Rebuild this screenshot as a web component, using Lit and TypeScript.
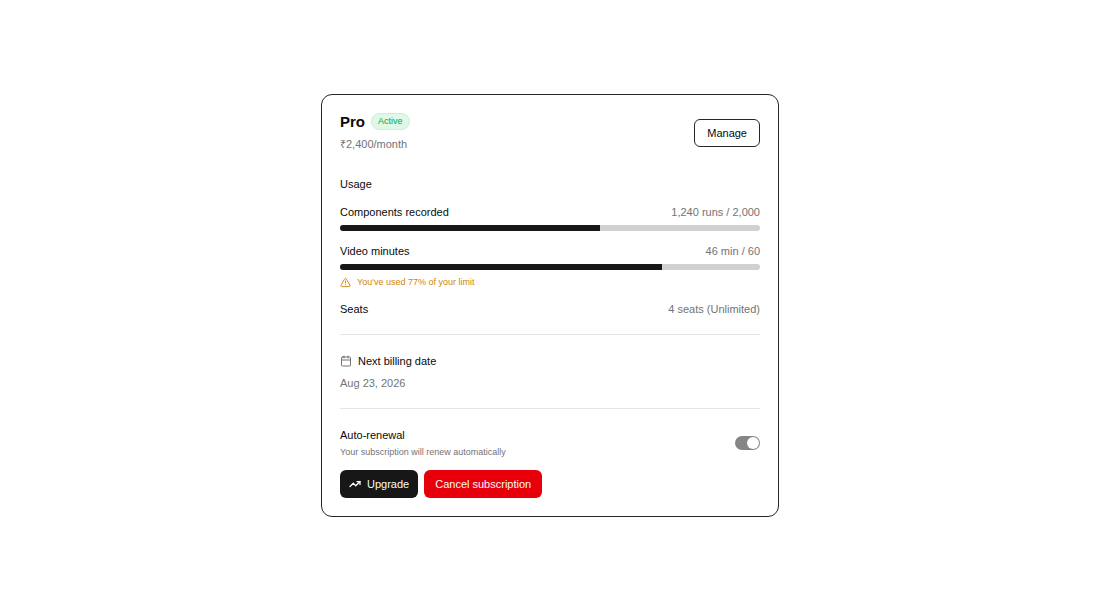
import { LitElement, html, css, nothing } from "lit";
import { customElement, property, state } from "lit/decorators.js";

@customElement("usage-meter")
class UsageMeter extends LitElement {
  @property() label = "";
  @property() amount = "";
  @property({ type: Number }) percent: number | null = null;
  @property() warning = "";

  static styles = css`
    :host {
      display: flex;
      flex-direction: column;
      gap: 5px;
    }
    .row {
      display: flex;
      justify-content: space-between;
    }
    .amount {
      color: #737373;
    }
    .track {
      height: 6px;
      border-radius: 3px;
      background: #d0d0d0;
      overflow: hidden;
    }
    .fill {
      height: 100%;
      background: #171717;
    }
    .warning {
      display: flex;
      align-items: center;
      gap: 6px;
      margin: 0;
      font-size: 9px;
      line-height: 14px;
      color: #d08700;
    }
    svg {
      width: 11px;
      height: 11px;
      fill: none;
      stroke: currentColor;
      stroke-width: 2;
      stroke-linecap: round;
      stroke-linejoin: round;
    }
  `;

  render() {
    return html`
      <div class="row">
        <span>${this.label}</span>
        <span class="amount">${this.amount}</span>
      </div>
      ${this.percent === null
        ? nothing
        : html`<div
            class="track"
            role="progressbar"
            aria-label=${this.label}
            aria-valuenow=${Math.round(this.percent)}
          >
            <div class="fill" style="width:${this.percent}%"></div>
          </div>`}
      ${this.warning
        ? html`<p class="warning">
            <svg viewBox="0 0 24 24" aria-hidden="true">
              <path d="m21.73 18-8-14a2 2 0 0 0-3.48 0l-8 14A2 2 0 0 0 4 21h16a2 2 0 0 0 1.73-3" />
              <path d="M12 9v4M12 17h.01" />
            </svg>
            <span>${this.warning}</span>
          </p>`
        : nothing}
    `;
  }
}

@customElement("app-root")
class AppRoot extends LitElement {
  @state() private autoRenew = true;

  static styles = css`
    :host {
      display: flex;
      align-items: center;
      justify-content: center;
      min-height: 100vh;
      background: #fff;
      color: #0a0a0a;
      font-family: "Liberation Sans", Arial, sans-serif;
      font-size: 11px;
      line-height: 16px;
    }
    .card {
      box-sizing: border-box;
      width: 100%;
      max-width: 458px;
      padding: 18px;
      border: 1px solid #262626;
      border-radius: 11px;
      display: flex;
      flex-direction: column;
    }
    .header,
    .renewal {
      display: flex;
      align-items: center;
      justify-content: space-between;
    }
    .plan {
      display: flex;
      flex-direction: column;
      gap: 6px;
    }
    .title {
      display: flex;
      align-items: center;
      gap: 6px;
    }
    h1,
    h2,
    p {
      margin: 0;
      font-size: 11px;
      font-weight: 400;
    }
    h1 {
      font-size: 15px;
      line-height: 17px;
      font-weight: 700;
    }
    .badge {
      padding: 0 6px;
      border: 1px solid #c4f2d5;
      border-radius: 9px;
      background: #dff8e8;
      color: #00a63e;
      font-size: 9px;
      line-height: 15px;
    }
    .muted {
      color: #737373;
    }
    .usage {
      display: flex;
      flex-direction: column;
      gap: 12px;
      margin-top: 24px;
    }
    .billing,
    .renew-section {
      margin-top: 17px;
      padding-top: 18px;
      border-top: 1px solid #e5e5e5;
    }
    .billing {
      display: flex;
      flex-direction: column;
      gap: 6px;
    }
    .billing-title {
      display: flex;
      align-items: center;
      gap: 6px;
    }
    .icon {
      width: 12px;
      height: 12px;
      fill: none;
      stroke: currentColor;
      stroke-width: 2;
      stroke-linecap: round;
      stroke-linejoin: round;
    }
    .renew-text {
      display: flex;
      flex-direction: column;
      gap: 2px;
    }
    .small {
      font-size: 9px;
      line-height: 14px;
    }
    .switch {
      appearance: none;
      box-sizing: border-box;
      display: flex;
      width: 25px;
      height: 14px;
      margin: 0;
      padding: 1px;
      border-radius: 7px;
      background: #d0d0d0;
    }
    .switch::before {
      content: "";
      width: 12px;
      height: 12px;
      border-radius: 50%;
      background: #fff;
    }
    .switch:checked {
      justify-content: flex-end;
      background: #858585;
    }
    .actions {
      display: flex;
      flex-wrap: wrap;
      gap: 6px;
      margin-top: 11px;
    }
    button {
      display: flex;
      align-items: center;
      justify-content: center;
      gap: 6px;
      height: 28px;
      padding: 0 11px;
      border: 0;
      border-radius: 6px;
      font: inherit;
      color: #fafafa;
      cursor: pointer;
    }
    .manage {
      padding: 0 12px;
      border: 1px solid #262626;
      background: #fff;
      color: #0a0a0a;
    }
    .upgrade {
      padding: 0 9px;
      background: #171717;
    }
    .upgrade .icon {
      stroke-width: 2.5;
    }
    .cancel {
      background: #e7000b;
    }
  `;

  private toggle(e: Event) {
    this.autoRenew = (e.target as HTMLInputElement).checked;
  }

  render() {
    return html`
      <main class="card">
        <header class="header">
          <div class="plan">
            <div class="title">
              <h1>Pro</h1>
              <span class="badge">Active</span>
            </div>
            <p class="muted">₹2,400/month</p>
          </div>
          <button class="manage" type="button">Manage</button>
        </header>
        <section class="usage">
          <h2>Usage</h2>
          <usage-meter label="Components recorded" amount="1,240 runs / 2,000" .percent=${62}></usage-meter>
          <usage-meter
            label="Video minutes"
            amount="46 min / 60"
            .percent=${(46 / 60) * 100}
            warning="You've used 77% of your limit"
          ></usage-meter>
          <usage-meter label="Seats" amount="4 seats (Unlimited)"></usage-meter>
        </section>
        <section class="billing">
          <div class="billing-title">
            <svg class="icon muted" viewBox="0 0 24 24" aria-hidden="true">
              <path d="M8 2v4M16 2v4M3 10h18" />
              <rect width="18" height="18" x="3" y="4" rx="2" />
            </svg>
            <h2>Next billing date</h2>
          </div>
          <p class="muted">Aug 23, 2026</p>
        </section>
        <section class="renew-section">
          <div class="renewal">
            <div class="renew-text">
              <label for="auto-renewal">Auto-renewal</label>
              <p class="muted small" id="renew-note">Your subscription will renew automatically</p>
            </div>
            <input
              class="switch"
              id="auto-renewal"
              type="checkbox"
              role="switch"
              aria-describedby="renew-note"
              .checked=${this.autoRenew}
              @change=${this.toggle}
            />
          </div>
          <div class="actions">
            <button class="upgrade" type="button">
              <svg class="icon" viewBox="0 0 24 24" aria-hidden="true">
                <path d="M16 7h6v6" />
                <path d="m22 7-8.5 8.5-5-5L2 17" />
              </svg>
              Upgrade
            </button>
            <button class="cancel" type="button">Cancel subscription</button>
          </div>
        </section>
      </main>
    `;
  }
}
